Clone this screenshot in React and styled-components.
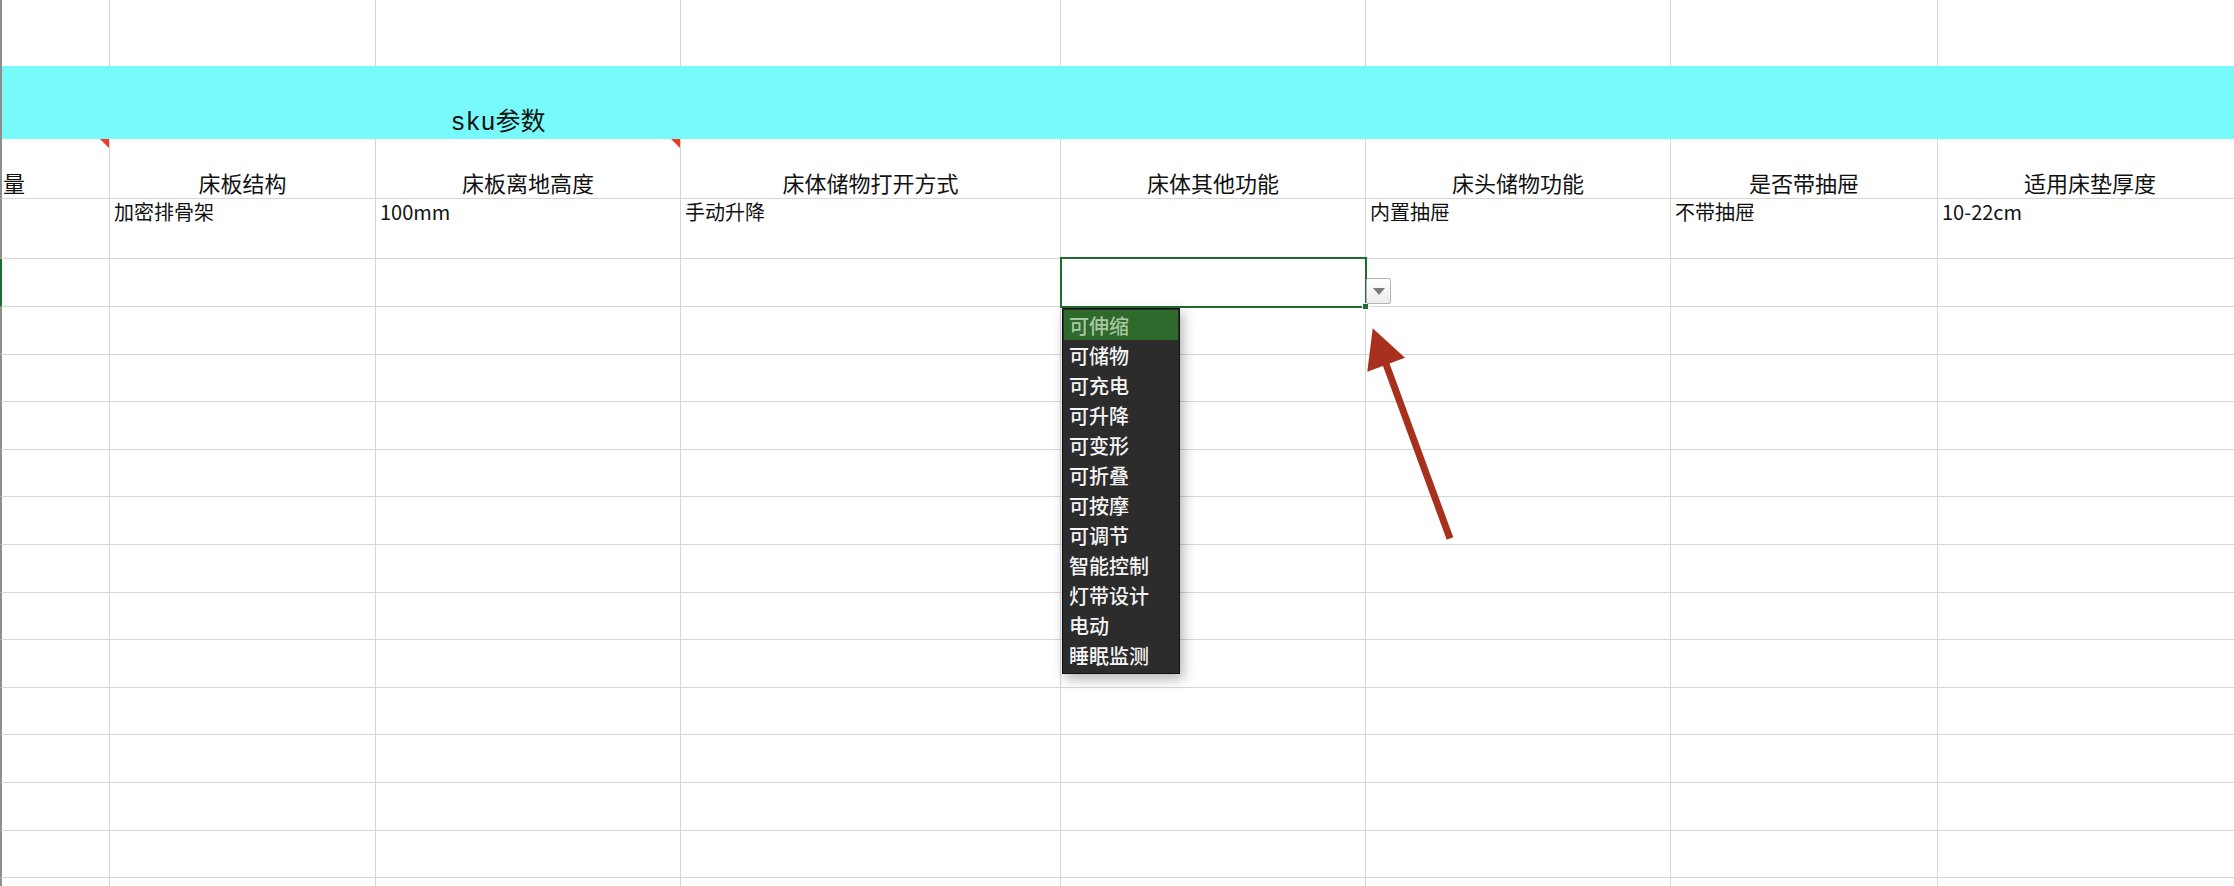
import React from 'react';
import styled, { createGlobalStyle } from 'styled-components';

const GlobalStyle = createGlobalStyle`
  html, body { margin: 0; padding: 0; background: #ffffff; overflow: hidden; }
  body { font-family: "Noto Sans CJK SC", "Noto Sans", sans-serif; color: #111; }
  * { box-sizing: border-box; }
`;

const COLS = [108, 266, 305, 380, 305, 305, 267, 305];
const GRID = COLS.map((w) => `${w}px`).join(' ');
const LINE = '#d6d6d6';
const GREEN = '#1f6d2e';

const Sheet = styled.div`
  position: relative;
  width: 2234px;
  height: 886px;
  overflow: hidden;
  display: flex;
  flex-direction: column;
  background: #fff;
`;

const Row = styled.div`
  flex: none;
  display: grid;
  grid-template-columns: ${GRID};
  height: ${(p) => p.$h}px;
  border-left: 2px solid ${(p) => (p.$active ? GREEN : '#8e8e8e')};
  border-bottom: ${(p) => (p.$line ? `1px solid ${LINE}` : 'none')};
`;

const Cell = styled.div`
  position: relative;
  min-width: 0;
  border-right: 1px solid ${LINE};
  display: flex;
  white-space: nowrap;
`;

const HeadCell = styled(Cell)`
  align-items: flex-end;
  justify-content: ${(p) => (p.$left ? 'flex-start' : 'center')};
  padding-bottom: 3px;
  padding-left: ${(p) => (p.$left ? '1px' : '0')};
  font-size: 22px;
  line-height: 26px;
  color: #111;
  &::after {
    content: '';
    display: ${(p) => (p.$comment ? 'block' : 'none')};
    position: absolute;
    top: 0;
    right: 0;
    border-style: solid;
    border-width: 0 9px 9px 0;
    border-color: transparent #ec3a2a transparent transparent;
  }
`;

const DataCell = styled(Cell)`
  align-items: flex-start;
  padding: 1px 4px 0;
  font-size: 20px;
  line-height: 24px;
  color: #111;
`;

const Banner = styled.div`
  flex: none;
  height: 73px;
  background: #78fafb;
  border-left: 2px solid #8e8e8e;
  display: flex;
  align-items: flex-end;
`;

const BannerTitle = styled.div`
  width: 992px;
  display: flex;
  justify-content: center;
  align-items: baseline;
  padding-bottom: 0;
  font-size: 25px;
  line-height: 30px;
  color: #111;
`;

const Mono = styled.span`
  font-family: "Liberation Mono", "DejaVu Sans Mono", monospace;
  font-weight: 300;
`;

const Selection = styled.div`
  position: absolute;
  top: -2px;
  left: -1px;
  right: -2px;
  bottom: -2px;
  border: 2px solid ${GREEN};
  pointer-events: none;
  z-index: 3;
`;

const FillHandle = styled.div`
  position: absolute;
  right: -4px;
  bottom: -4px;
  width: 7px;
  height: 7px;
  background: ${GREEN};
  border: 1px solid #ffffff;
  z-index: 4;
`;

const DropButton = styled.div`
  position: absolute;
  left: calc(100% + 1px);
  top: 19px;
  width: 25px;
  height: 26px;
  border: 1px solid #b4b4b4;
  border-radius: 2px;
  background: linear-gradient(#fefefe, #ececec);
  display: flex;
  align-items: center;
  justify-content: center;
  z-index: 4;
  &::before {
    content: '';
    border-style: solid;
    border-width: 7px 6px 0 6px;
    border-color: #7c7c7c transparent transparent transparent;
  }
`;

const DropList = styled.ul`
  position: absolute;
  top: calc(100% + 2px);
  left: 1px;
  width: 118px;
  margin: 0;
  padding: 1px 1px 3px;
  list-style: none;
  background: #2c2c2c;
  border: 1px solid #111;
  box-shadow: 3px 5px 12px rgba(0, 0, 0, 0.3);
  z-index: 5;
`;

const DropItem = styled.li`
  height: 30px;
  padding-left: 5px;
  display: flex;
  align-items: center;
  font-size: 20px;
  font-weight: 500;
  color: ${(p) => (p.$selected ? '#a8c8a1' : '#f4f4f4')};
  background: ${(p) => (p.$selected ? '#2e6a2c' : 'transparent')};
  white-space: nowrap;
`;

const Annotation = styled.svg`
  position: absolute;
  left: 1360px;
  top: 320px;
  width: 100px;
  height: 230px;
  overflow: visible;
  z-index: 6;
`;

const HEADERS = ['量', '床板结构', '床板离地高度', '床体储物打开方式', '床体其他功能', '床头储物功能', '是否带抽屉', '适用床垫厚度'];
const DATA = ['', '加密排骨架', '100mm', '手动升降', '', '内置抽屉', '不带抽屉', '10-22cm'];
const OPTIONS = ['可伸缩', '可储物', '可充电', '可升降', '可变形', '可折叠', '可按摩', '可调节', '智能控制', '灯带设计', '电动', '睡眠监测'];
const ROW_HEIGHTS = [48, 48, 47, 48, 47, 48, 48, 47, 48, 47, 48, 48, 47, 48];

function EmptyCells() {
  return COLS.map((_, i) => <Cell key={i} />);
}

export default function App() {
  return (
    <>
      <GlobalStyle />
      <Sheet>
        <Row $h={66}>
          <EmptyCells />
        </Row>
        <Banner>
          <BannerTitle>
            <Mono>sku</Mono>
            <span>参数</span>
          </BannerTitle>
        </Banner>
        <Row $h={60} $line>
          {HEADERS.map((h, i) => (
            <HeadCell key={i} $left={i === 0} $comment={i === 0 || i === 2}>
              {h}
            </HeadCell>
          ))}
        </Row>
        <Row $h={60} $line>
          {DATA.map((d, i) => (
            <DataCell key={i}>{d}</DataCell>
          ))}
        </Row>
        {ROW_HEIGHTS.map((h, r) => (
          <Row key={r} $h={h} $line $active={r === 0}>
            {COLS.map((_, c) =>
              r === 0 && c === 4 ? (
                <Cell key={c}>
                  <Selection />
                  <FillHandle />
                  <DropButton />
                  <DropList>
                    {OPTIONS.map((o, k) => (
                      <DropItem key={o} $selected={k === 0}>
                        {o}
                      </DropItem>
                    ))}
                  </DropList>
                </Cell>
              ) : (
                <Cell key={c} />
              )
            )}
          </Row>
        ))}
        <Annotation viewBox="0 0 100 230">
          <line x1="26" y1="44" x2="90" y2="218.5" stroke="#a8301f" strokeWidth="7" />
          <polygon points="12.7,8.3 7.3,51.7 45,37.7" fill="#a8301f" />
        </Annotation>
      </Sheet>
    </>
  );
}
